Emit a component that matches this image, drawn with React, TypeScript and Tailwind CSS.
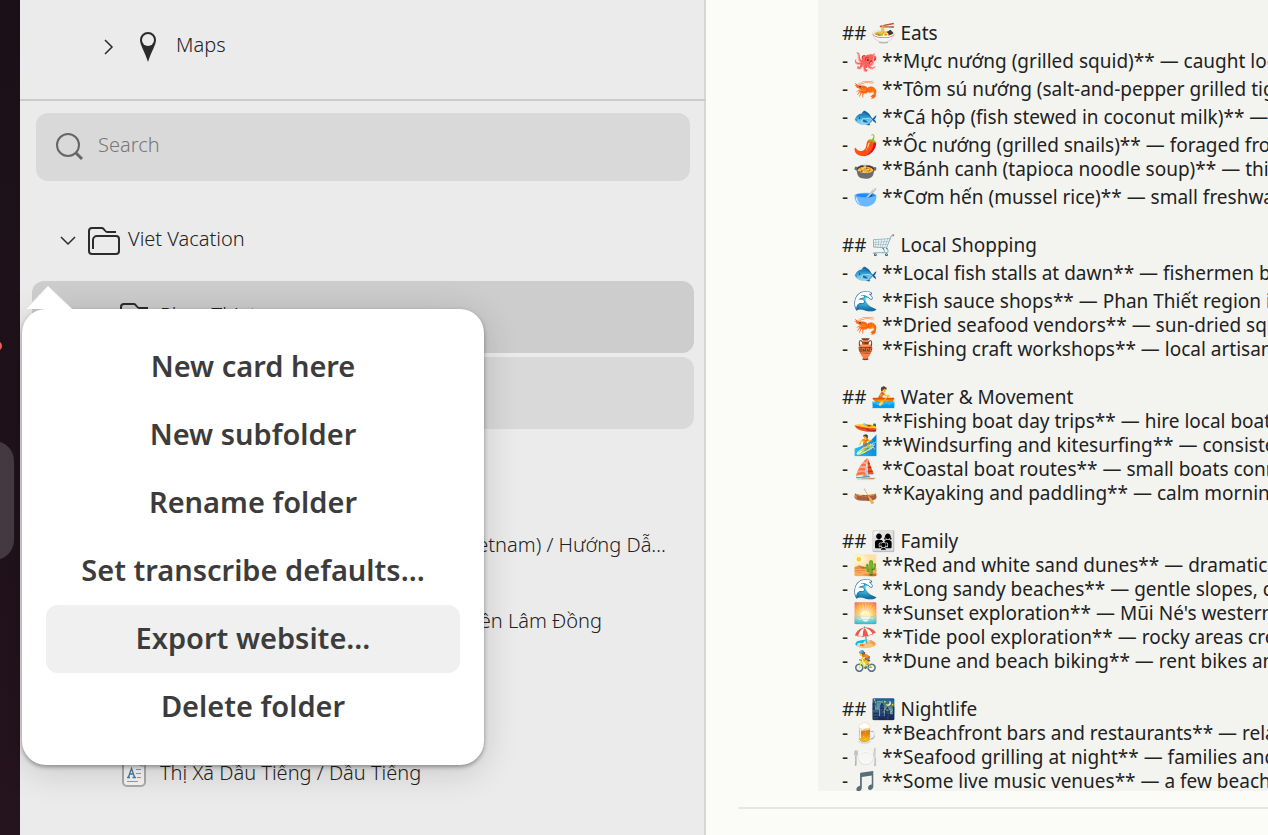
import { type ReactNode } from "react";

interface NoteLine {
  emoji?: string;
  heading?: string;
  text?: string;
  tall?: boolean;
}

const noteLines: NoteLine[] = [
  { emoji: "🍜", heading: "Eats" },
  { emoji: "🐙", text: "**Mực nướng (grilled squid)** — caught locally, charred", tall: true },
  { emoji: "🦐", text: "**Tôm sú nướng (salt-and-pepper grilled tiger prawns)**", tall: true },
  { emoji: "🐟", text: "**Cá hộp (fish stewed in coconut milk)** — home style", tall: true },
  { emoji: "🌶️", text: "**Ốc nướng (grilled snails)** — foraged from the rocks", tall: true },
  { emoji: "🍲", text: "**Bánh canh (tapioca noodle soup)** — thick noodles" },
  { emoji: "🥣", text: "**Cơm hến (mussel rice)** — small freshwater mussels", tall: true },
  {},
  { emoji: "🛒", heading: "Local Shopping" },
  { emoji: "🐟", text: "**Local fish stalls at dawn** — fishermen bring in the catch", tall: true },
  { emoji: "🌊", text: "**Fish sauce shops** — Phan Thiết region is famous for it", tall: true },
  { emoji: "🦐", text: "**Dried seafood vendors** — sun-dried squid and shrimp" },
  { emoji: "🏺", text: "**Fishing craft workshops** — local artisans at work" },
  {},
  { emoji: "🚣", heading: "Water & Movement" },
  { emoji: "🚤", text: "**Fishing boat day trips** — hire local boats and crew" },
  { emoji: "🏄", text: "**Windsurfing and kitesurfing** — consistent wind" },
  { emoji: "⛵", text: "**Coastal boat routes** — small boats connect the bays" },
  { emoji: "🛶", text: "**Kayaking and paddling** — calm mornings are best" },
  {},
  { emoji: "👨‍👩‍👧", heading: "Family" },
  { emoji: "🏜️", text: "**Red and white sand dunes** — dramatic landscapes" },
  { emoji: "🌊", text: "**Long sandy beaches** — gentle slopes, calm water" },
  { emoji: "🌅", text: "**Sunset exploration** — Mũi Né's western shoreline" },
  { emoji: "🏖️", text: "**Tide pool exploration** — rocky areas create pools" },
  { emoji: "🚴", text: "**Dune and beach biking** — rent bikes and explore" },
  {},
  { emoji: "🌃", heading: "Nightlife" },
  { emoji: "🍺", text: "**Beachfront bars and restaurants** — relaxed evenings" },
  { emoji: "🍽️", text: "**Seafood grilling at night** — families and friends" },
  { emoji: "🎵", text: "**Some live music venues** — a few beach bars have bands" },
];

const menuItems = [
  "New card here",
  "New subfolder",
  "Rename folder",
  "Set transcribe defaults…",
  "Export website…",
  "Delete folder",
];

const FolderIcon = () => (
  <svg className="h-8 w-8 shrink-0" viewBox="0 0 32 32" fill="none" stroke="#2b2b2b" strokeWidth="2">
    <path d="M28 7H19c-2 0-3-4-5-4H4a3 3 0 0 0-3 3v20a3 3 0 0 0 3 3h24a3 3 0 0 0 3-3V14a3 3 0 0 0-3-3H9a4 4 0 0 0-4 4v9" />
  </svg>
);

const CardIcon = () => (
  <svg className="h-7 w-6 shrink-0" viewBox="0 0 24 28">
    <path d="M4 1h14l5 5v17a4 4 0 0 1-4 4H5a4 4 0 0 1-4-4V4a3 3 0 0 1 3-3z" fill="#f6f6f6" stroke="#ababab" strokeWidth="2" />
    <path d="M17 1v3a3 3 0 0 0 3 3h3" fill="#fff" stroke="#ababab" />
    <path d="M6.500 18l3-8.500 3 8.500M7.500 15h4M5 18.500h3M10.500 18.500h3.500" fill="none" stroke="#3e7fb0" strokeWidth="1.400" />
    <path d="M14 10.500h5M14 14.500h5M15 18.500h4M5 22.500h11" stroke="#69a9d6" />
  </svg>
);

interface TreeRowProps {
  className: string;
  children?: ReactNode;
}

const TreeRow = ({ className, children }: TreeRowProps) => (
  <li className={`flex h-[72px] items-center rounded-xl ${className}`}>{children}</li>
);

const ContextMenu = () => (
  <div className="absolute left-[22px] top-[309px] w-[462px] rounded-[24px] bg-white p-6 shadow-[0_2px_4px_rgba(0,0,0,0.35),0_6px_36px_rgba(0,0,0,0.16)]">
    <svg className="absolute -top-6 left-1 h-6 w-12" viewBox="0 0 48 24">
      <path d="M0 24 22 1 46 24" fill="#fff" stroke="#e4e4e4" />
    </svg>
    <ul>
      {menuItems.map((item) => (
        <li key={item}>
          <button
            type="button"
            className={`h-[68px] w-full rounded-xl pb-0.5 text-[29px] font-semibold text-[#3c3c3c] ${
              item === "Export website…" ? "bg-[#f0f0f0]" : "bg-white"
            }`}
          >
            {item}
          </button>
        </li>
      ))}
    </ul>
  </div>
);

const Sidebar = () => (
  <aside className="w-[686px] shrink-0 border-r-2 border-[#d6d6d6] bg-[#ebebeb]">
    <div className="-mr-0.5 flex h-[101px] items-center border-b-2 border-[#cbcbcb] pb-1.5 pl-[84px]">
      <svg className="h-4 w-2.5" viewBox="0 0 10 16" fill="none" stroke="#2b2b2b" strokeWidth="1.500">
        <path d="m1 1 7 7-7 7" />
      </svg>
      <svg className="ml-[26px] h-[30px] w-4" viewBox="0 0 16 30">
        <path d="M0 8a8 8 0 0 1 16 0c0 5-5 12-8 22C5 20 0 13 0 8z" fill="#2b2b2b" />
        <circle cx="8" cy="8" r="6" fill="#ebebeb" />
      </svg>
      <span className="ml-5 pb-1">Maps</span>
    </div>
    <label className="ml-4 mr-3.5 mt-3 flex h-[68px] items-center rounded-xl bg-[#d9d9d9] pl-5">
      <svg className="h-7 w-7" viewBox="0 0 28 28" fill="none" stroke="#666">
        <circle cx="12" cy="12" r="11" strokeWidth="2" />
        <path d="m20 20 6 6" strokeWidth="3" />
      </svg>
      <input
        type="text"
        aria-label="Search"
        placeholder="Search"
        className="ml-3.5 flex-1 bg-transparent pb-1 font-light outline-none placeholder:text-[#777]"
      />
    </label>
    <ul className="mt-6 space-y-1 pl-3 pr-2.5">
      <TreeRow className="pl-7">
        <svg className="h-2.5 w-4" viewBox="0 0 16 10" fill="none" stroke="#2b2b2b" strokeWidth="1.500">
          <path d="m1 1 7 7 7-7" />
        </svg>
        <span className="ml-3">
          <FolderIcon />
        </span>
        <span className="ml-2 pb-1">Viet Vacation</span>
      </TreeRow>
      <TreeRow className="bg-[#cdcdcd] pl-[88px]">
        <FolderIcon />
        <span className="ml-2 pb-1">Phan Thiet</span>
      </TreeRow>
      <TreeRow className="bg-[#d9d9d9]" />
      <TreeRow className="" />
      <TreeRow className="justify-end pr-7">(Vietnam) / Hướng Dẫ…</TreeRow>
      <TreeRow className="justify-end pr-[92px]">Nguyên Lâm Đồng</TreeRow>
      <TreeRow className="" />
      <TreeRow className="pl-[90px]">
        <CardIcon />
        <span className="ml-3.5">Thị Xã Dầu Tiếng / Dầu Tiếng</span>
      </TreeRow>
    </ul>
  </aside>
);

const Note = () => (
  <main className="min-w-0 flex-1 bg-[#fbfcf7]">
    <div className="ml-28 h-[791px] overflow-hidden bg-[#f3f4f0] pl-6 pt-[21px] text-[19px] font-normal">
      {noteLines.map(({ emoji, heading, text, tall }, i) => (
        <div key={i} className={`flex items-end whitespace-pre leading-6 ${tall ? "h-7" : "h-6"}`}>
          {emoji && (
            <>
              <span>{heading ? "## " : "- "}</span>
              <span className="w-6 shrink-0 font-['Noto_Color_Emoji'] text-[20px]">{emoji}</span>
              <span> {heading ?? text}</span>
            </>
          )}
        </div>
      ))}
    </div>
    <hr className="ml-8 mt-4 border-t-2 border-[#e6e7e3]" />
  </main>
);

const App = () => {
  return (
    <div className="relative flex min-h-screen overflow-hidden font-['Noto_Sans',sans-serif] text-[20px] font-light text-[#222]">
      <div className="relative w-5 shrink-0 bg-linear-to-b from-[#1b1017] to-[#25141d]">
        <div className="absolute -left-2 top-[341px] h-2.5 w-2.5 rounded-full bg-[#f0605a]" />
        <div className="absolute -left-20 top-[441px] h-[119px] w-[94px] rounded-[20px] bg-[#463b42]" />
      </div>
      <Sidebar />
      <Note />
      <ContextMenu />
    </div>
  );
};

export default App;
